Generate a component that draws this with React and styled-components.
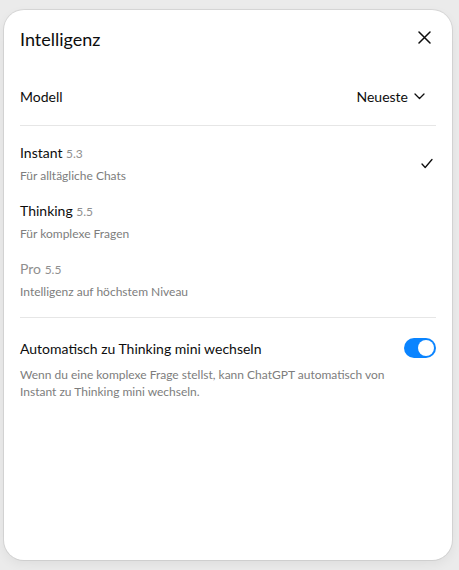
import React from 'react';
import styled, { createGlobalStyle } from 'styled-components';

const GlobalStyle = createGlobalStyle`
  html, body {
    margin: 0;
    padding: 0;
    background: #ebebeb;
  }
  body {
    font-family: Lato, "Noto Sans", sans-serif;
    color: #0d0d0d;
  }
`;

const models = [
    { name: 'Instant', version: '5.3', hint: 'Für alltägliche Chats', selected: true },
    { name: 'Thinking', version: '5.5', hint: 'Für komplexe Fragen' },
    { name: 'Pro', version: '5.5', hint: 'Intelligenz auf höchstem Niveau', disabled: true },
];

const CloseIcon = () => (
    <svg width="13" height="13" viewBox="0 0 13 13" fill="none" stroke="#0d0d0d" strokeWidth="1.5" strokeLinecap="round">
        <path d="M1 1 L12 12 M12 1 L1 12" />
    </svg>
);

const ChevronIcon = () => (
    <svg width="11" height="7" viewBox="0 0 11 7" fill="none" stroke="#0d0d0d" strokeWidth="1.3" strokeLinecap="round" strokeLinejoin="round">
        <path d="M1 1 L5.5 5.5 L10 1" />
    </svg>
);

const CheckIcon = () => (
    <svg width="12" height="11" viewBox="0 0 12 11" fill="none" stroke="#0d0d0d" strokeWidth="1.3" strokeLinecap="round" strokeLinejoin="round">
        <path d="M1 6 L4.2 9.5 L11 1.5" />
    </svg>
);

let ModelRow = ({ name, version, hint, selected, disabled }) => (
    <ModelItem>
        <ModelText>
            <ModelName $disabled={disabled}>
                {name} <ModelVersion>{version}</ModelVersion>
            </ModelName>
            <ModelHint>{hint}</ModelHint>
        </ModelText>
        {selected && <CheckIcon />}
    </ModelItem>
);

class App extends React.Component {
    render() {
        return (
            <React.Fragment>
                <GlobalStyle />
                <Page>
                    <Dialog>
                        <Header>
                            <Title>Intelligenz</Title>
                            <CloseButton><CloseIcon /></CloseButton>
                        </Header>

                        <SettingRow>
                            <Label>Modell</Label>
                            <Select>
                                Neueste <ChevronIcon />
                            </Select>
                        </SettingRow>

                        <Divider />

                        <ModelList>
                            {models.map((model, index) => (
                                <ModelRow key={`model_${index}`} {...model} />
                            ))}
                        </ModelList>

                        <Divider />

                        <ToggleSection>
                            <ToggleRow>
                                <Label>Automatisch zu Thinking mini wechseln</Label>
                                <Switch $on />
                            </ToggleRow>
                            <Description>
                                Wenn du eine komplexe Frage stellst, kann ChatGPT automatisch von Instant zu Thinking mini wechseln.
                            </Description>
                        </ToggleSection>
                    </Dialog>
                </Page>
            </React.Fragment>
        );
    }
}

const Page = styled.div`
  width: 459px;
  height: 570px;
  padding: 10px 7px 10px 4px;
  box-sizing: border-box;
  overflow: hidden;
`;

const Dialog = styled.div`
  height: 100%;
  background: #ffffff;
  border-radius: 20px;
  box-shadow: 0 0 0 1px rgba(0, 0, 0, 0.08), 0 4px 12px rgba(0, 0, 0, 0.06);
  padding: 0 16px;
  box-sizing: border-box;
  display: flex;
  flex-direction: column;
`;

const Header = styled.div`
  display: flex;
  align-items: center;
  justify-content: space-between;
  height: 58px;
`;

const Title = styled.h2`
  margin: 0;
  font-size: 18px;
  font-weight: 400;
`;

const CloseButton = styled.button`
  border: 0;
  background: none;
  padding: 0;
  width: 24px;
  height: 24px;
  display: flex;
  align-items: center;
  justify-content: center;
  margin-top: -3px;
`;

const SettingRow = styled.div`
  display: flex;
  align-items: center;
  justify-content: space-between;
  height: 57px;
`;

const Label = styled.span`
  font-size: 14px;
`;

const Select = styled.div`
  display: flex;
  align-items: center;
  gap: 6px;
  font-size: 14px;
  padding-right: 11px;
`;

const Divider = styled.hr`
  margin: 0;
  border: 0;
  border-top: 1px solid #e6e6e6;
`;

const ModelList = styled.div`
  display: flex;
  flex-direction: column;
  padding: 17px 0 17px;
  gap: 17px;
`;

const ModelItem = styled.div`
  display: flex;
  align-items: center;
  justify-content: space-between;
  padding-right: 3px;
`;

const ModelText = styled.div`
  display: flex;
  flex-direction: column;
  gap: 4px;
`;

const ModelName = styled.div`
  font-size: 14px;
  line-height: 20px;
  color: ${props => props.$disabled ? '#8f8f8f' : '#0d0d0d'};
`;

const ModelVersion = styled.span`
  font-size: 12px;
  color: #8f8f8f;
`;

const ModelHint = styled.div`
  font-size: 12px;
  line-height: 16px;
  color: #7d7d7d;
`;

const ToggleSection = styled.div`
  padding-top: 20px;
`;

const ToggleRow = styled.div`
  display: flex;
  align-items: center;
  justify-content: space-between;
`;

const Switch = styled.span`
  width: 32px;
  height: 20px;
  border-radius: 10px;
  background: ${props => props.$on ? '#0a84ff' : '#d9d9d9'};
  position: relative;
  &::after {
    content: '';
    position: absolute;
    top: 2px;
    left: ${props => props.$on ? '14px' : '2px'};
    width: 16px;
    height: 16px;
    border-radius: 50%;
    background: #fff;
  }
`;

const Description = styled.p`
  margin: 8px 0 0;
  font-size: 12px;
  line-height: 17px;
  color: #7d7d7d;
  max-width: 380px;
`;

export default App;
